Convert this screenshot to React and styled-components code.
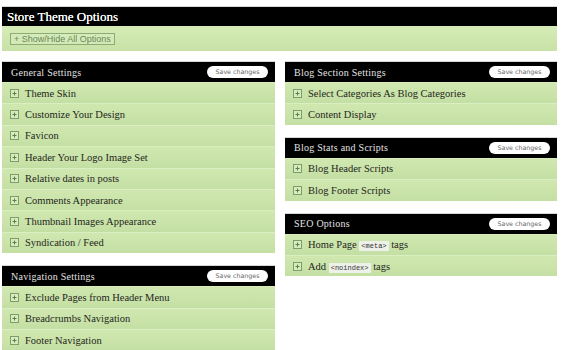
import React from "react"
import styled, { createGlobalStyle } from "styled-components"

const GlobalStyle = createGlobalStyle`
  html, body {
    margin: 0;
    padding: 0;
    background: #ffffff;
  }
  body {
    font-family: "Liberation Serif", serif;
  }
`

const Page = styled.div`
  width: 555px;
  padding: 6px 0 0 2px;
`

const Panel = styled.div`
  border-top: 1px solid #d6d6d6;
`

const MainHeader = styled.div`
  background: #000;
  color: #fff;
  height: 19px;
  line-height: 19px;
  padding-left: 5px;
  font-family: "Liberation Serif", serif;
  font-size: 13px;
  text-shadow: 0 0 0.4px #fff;
`

const ToggleBar = styled.div`
  height: 25px;
  display: flex;
  align-items: center;
  padding-left: 8px;
  background: linear-gradient(180deg, #d6edb7 0%, #c7e1a6 100%);
`

const ToggleButton = styled.div`
  border: 1px solid #8eab77;
  height: 10px;
  line-height: 10px;
  padding: 0 3px;
  font-family: "Liberation Sans", sans-serif;
  font-size: 9px;
  color: #6a8758;
  background: rgba(255, 255, 255, 0.12);
`

const Columns = styled.div`
  display: grid;
  grid-template-columns: 273px 272px;
  column-gap: 10px;
  margin-top: 10px;
  align-items: start;
`

const Column = styled.div`
  display: flex;
  flex-direction: column;
  gap: 12px;
`

const SectionHeader = styled.div`
  background: #000;
  height: 20px;
  display: flex;
  align-items: center;
  justify-content: space-between;
  padding: 0 7px 0 9px;
`

const SectionTitle = styled.span`
  color: #e2e2e2;
  font-family: "Liberation Serif", serif;
  font-size: 10px;
  letter-spacing: 0.25px;
`

const SaveButton = styled.span`
  background: #fff;
  color: #666;
  border-radius: 7px;
  width: 61px;
  height: 12px;
  line-height: 12px;
  text-align: center;
  font-family: "DejaVu Sans", sans-serif;
  font-size: 6.3px;
`

const Row = styled.div`
  height: 21.4px;
  box-sizing: border-box;
  display: flex;
  align-items: center;
  gap: 6px;
  padding-left: 8px;
  border-top: 1px solid #d9eec1;
  background: linear-gradient(180deg, #d0e8b0 0%, #c4dfa3 100%);
  &:first-child {
    border-top-color: #d6edb9;
  }
`

const Plus = styled.span`
  width: 7px;
  height: 7px;
  border: 1px solid #7f9d6c;
  display: flex;
  align-items: center;
  justify-content: center;
  background: #d6ecbb;
`

const RowLabel = styled.span`
  font-family: "Liberation Serif", serif;
  font-size: 10.5px;
  color: #26261e;
`

const Code = styled.code`
  font-family: "Liberation Mono", monospace;
  font-size: 7px;
  background: #eef1ea;
  color: #333;
  padding: 1px 2px;
`

const sections = {
  left: [
    {
      title: "General Settings",
      items: [
        "Theme Skin",
        "Customize Your Design",
        "Favicon",
        "Header Your Logo Image Set",
        "Relative dates in posts",
        "Comments Appearance",
        "Thumbnail Images Appearance",
        "Syndication / Feed",
      ],
    },
    {
      title: "Navigation Settings",
      items: [
        "Exclude Pages from Header Menu",
        "Breadcrumbs Navigation",
        "Footer Navigation",
      ],
    },
  ],
  right: [
    {
      title: "Blog Section Settings",
      items: ["Select Categories As Blog Categories", "Content Display"],
    },
    {
      title: "Blog Stats and Scripts",
      items: ["Blog Header Scripts", "Blog Footer Scripts"],
    },
    {
      title: "SEO Options",
      items: [
        <>
          Home Page <Code>&lt;meta&gt;</Code> tags
        </>,
        <>
          Add <Code>&lt;noindex&gt;</Code> tags
        </>,
      ],
    },
  ],
}

const PlusBox = () => (
  <Plus>
    <svg width="7" height="7" viewBox="0 0 7 7">
      <path d="M3.5 1.5v4M1.5 3.5h4" stroke="#5f7d50" strokeWidth="1" />
    </svg>
  </Plus>
)

const Section = ({ title, items }) => (
  <Panel>
    <SectionHeader>
      <SectionTitle>{title}</SectionTitle>
      <SaveButton>Save changes</SaveButton>
    </SectionHeader>
    <div>
      {items.map((item, i) => (
        <Row key={i}>
          <PlusBox />
          <RowLabel>{item}</RowLabel>
        </Row>
      ))}
    </div>
  </Panel>
)

const App = () => (
  <Page>
    <GlobalStyle />
    <Panel>
      <MainHeader>Store Theme Options</MainHeader>
      <ToggleBar>
        <ToggleButton>+ Show/Hide All Options</ToggleButton>
      </ToggleBar>
    </Panel>
    <Columns>
      <Column>
        {sections.left.map((s) => (
          <Section key={s.title} {...s} />
        ))}
      </Column>
      <Column>
        {sections.right.map((s) => (
          <Section key={s.title} {...s} />
        ))}
      </Column>
    </Columns>
  </Page>
)

export default App
